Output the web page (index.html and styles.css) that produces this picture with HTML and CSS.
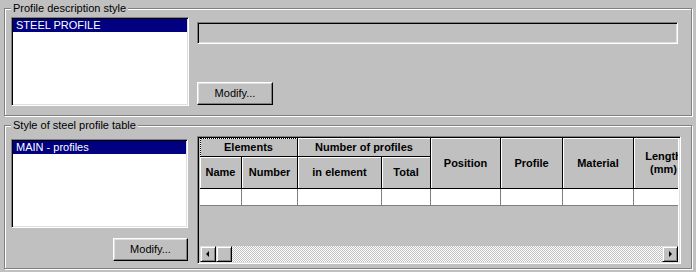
FILE: index.html
```html
<html lang="en">
<head>
    <meta charset="UTF-8">
    <title>Steel profile styles</title>
    <link rel="stylesheet" href="styles.css">
</head>
<body>

    <div class="dialog">

        <div class="group group-desc">
            <div class="group-title">Profile description style</div>
            <div class="group-body">
                <div class="listbox list-desc">
                    <div class="list-item selected">STEEL PROFILE</div>
                </div>
                <div class="desc-side">
                    <div class="textfield"></div>
                    <button class="btn btn-desc">Modify...</button>
                </div>
            </div>
        </div>

        <div class="group group-table">
            <div class="group-title">Style of steel profile table</div>
            <div class="group-body">
                <div class="table-side">
                    <div class="listbox list-table">
                        <div class="list-item selected">MAIN - profiles</div>
                    </div>
                    <button class="btn btn-table">Modify...</button>
                </div>

                <div class="grid">
                    <div class="grid-view">
                        <div class="grid-cells">
                            <div class="hcell span-2 focused">Elements</div>
                            <div class="hcell span-2">Number of profiles</div>
                            <div class="hcell tall">Position</div>
                            <div class="hcell tall">Profile</div>
                            <div class="hcell tall">Material</div>
                            <div class="hcell tall">Length<br>(mm)</div>

                            <div class="hcell">Name</div>
                            <div class="hcell">Number</div>
                            <div class="hcell">in element</div>
                            <div class="hcell">Total</div>

                            <div class="dcell"></div>
                            <div class="dcell"></div>
                            <div class="dcell"></div>
                            <div class="dcell"></div>
                            <div class="dcell"></div>
                            <div class="dcell"></div>
                            <div class="dcell"></div>
                            <div class="dcell"></div>
                        </div>

                        <div class="hscroll">
                            <div class="sb-btn"><span class="arrow-left"></span></div>
                            <div class="sb-btn sb-thumb"></div>
                            <div class="sb-track"></div>
                            <div class="sb-btn"><span class="arrow-right"></span></div>
                        </div>
                    </div>
                </div>
            </div>
        </div>

    </div>

</body>
</html>
```

FILE: styles.css
```css
:root {
    --face: #c0c0c0;
    --shadow: #808080;
    --light: #dfdfdf;
    --select: #000080;
}

* {
    box-sizing: border-box;
}

body {
    margin: 0;
    width: 696px;
    height: 272px;
    overflow: hidden;
    background: var(--face);
    font-family: 'Liberation Sans', Arial, sans-serif;
    font-size: 11px;
    line-height: 13px;
    color: #000;
}

.dialog {
    padding: 8px 0 0 4px;
}

/* etched group frame */
.group {
    width: 688px;
    border: 1px solid var(--shadow);
    box-shadow: inset 1px 1px 0 #fff, 1px 1px 0 #fff;
}

.group-desc {
    height: 108px;
}

.group-table {
    height: 144px;
    margin-top: 9px;
}

.group-title {
    display: table;
    margin: -7px 0 0 6px;
    padding: 0 2px;
    background: var(--face);
}

.group-body {
    display: flex;
    padding-left: 6px;
}

/* sunken list box */
.listbox {
    background: #fff;
    border: 1px solid;
    border-color: var(--shadow) #fff #fff var(--shadow);
    box-shadow: inset 1px 1px 0 #000, inset -1px -1px 0 var(--light);
    padding: 1px;
}

.list-item {
    height: 13px;
    padding-left: 3px;
    white-space: nowrap;
}

.list-item.selected {
    background: var(--select);
    color: #fff;
}

.list-desc {
    width: 178px;
    height: 89px;
    margin-top: 2px;
}

.desc-side {
    display: flex;
    flex-direction: column;
    align-items: flex-start;
    margin-left: 8px;
}

.textfield {
    width: 481px;
    height: 22px;
    margin-top: 7px;
    border: 1px solid;
    border-color: var(--shadow) #fff #fff var(--shadow);
    box-shadow: inset 1px 1px 0 #000, inset -1px -1px 0 var(--light);
}

/* raised push button */
.btn {
    height: 23px;
    padding: 0 0 1px;
    font: inherit;
    color: #000;
    background: var(--face);
    border: 1px solid;
    border-color: #fff #000 #000 #fff;
    box-shadow: inset -1px -1px 0 var(--shadow), inset 1px 1px 0 var(--light);
}

.btn-desc {
    width: 76px;
    margin-top: 38px;
}

.table-side {
    display: flex;
    flex-direction: column;
    align-items: flex-end;
    width: 177px;
    margin-top: 7px;
}

.list-table {
    width: 177px;
    height: 89px;
}

.btn-table {
    width: 75px;
    margin-top: 10px;
}

/* data grid */
.grid {
    width: 484px;
    height: 128px;
    margin: 4px 0 0 9px;
    padding: 1px 1px 1px 1px;
    border: 1px solid;
    border-color: var(--shadow) #fff #fff var(--shadow);
    box-shadow: inset 1px 1px 0 #000, inset -1px -1px 0 var(--light);
}

.grid-view {
    display: flex;
    flex-direction: column;
    height: 100%;
    padding-left: 1px;
    border-right: 1px solid #fff;
    overflow: hidden;
}

.grid-cells {
    display: grid;
    grid-template-columns: 42px 56px 84px 49px 70px 62px 71px 60px;
    grid-template-rows: 19px 32px 17px;
}

.hcell {
    display: flex;
    align-items: center;
    justify-content: center;
    text-align: center;
    white-space: nowrap;
    font-weight: bold;
    background: var(--face);
    border-right: 1px solid #000;
    border-bottom: 1px solid #000;
    box-shadow: inset 1px 1px 0 #fff;
}

.span-2 {
    grid-column: span 2;
}

.tall {
    grid-row: span 2;
}

.focused {
    outline: 1px dotted #000;
    outline-offset: -1px;
}

.dcell {
    background: #fff;
    border-right: 1px solid var(--shadow);
    border-bottom: 1px solid var(--shadow);
}

.hscroll {
    display: flex;
    height: 16px;
    margin-top: auto;
}

.sb-btn {
    display: flex;
    align-items: center;
    justify-content: center;
    width: 16px;
    height: 16px;
    flex: none;
    background: var(--face);
    border: 1px solid;
    border-color: var(--light) #000 #000 var(--light);
    box-shadow: inset 1px 1px 0 #fff, inset -1px -1px 0 var(--shadow);
}

.sb-track {
    flex: 1;
    background: repeating-conic-gradient(#fff 0 25%, var(--face) 0 50%) 0 0 / 2px 2px;
}

.arrow-left,
.arrow-right {
    width: 0;
    height: 0;
    border-top: 3px solid transparent;
    border-bottom: 3px solid transparent;
}

.arrow-left {
    border-right: 3px solid #000;
    margin-left: -1px;
}

.arrow-right {
    border-left: 3px solid #000;
    margin-left: 1px;
}
```
